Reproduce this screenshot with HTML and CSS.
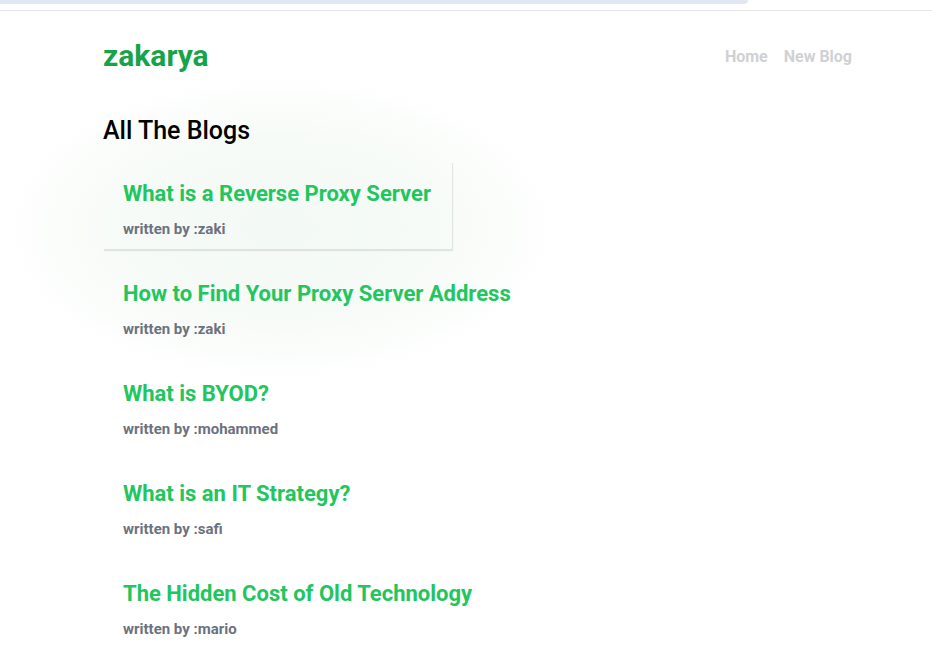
FILE: index.html
```html
<!DOCTYPE html>
<html lang="en">
<head>
<meta charset="utf-8">
<title>zakarya</title>
<link rel="stylesheet" href="styles.css">
</head>
<body>
<div class="chrome">
  <div class="chrome-tab"></div>
</div>
<div class="page">
  <nav class="navbar">
    <h1 class="logo">zakarya</h1>
    <div class="links">
      <a href="#" class="link">Home</a>
      <a href="#" class="link">New Blog</a>
    </div>
  </nav>
  <main class="content">
    <h2 class="section-title">All The Blogs</h2>
    <div class="blog-list">
      <div class="blog-preview is-hover">
        <h3 class="blog-title">What is a Reverse Proxy Server</h3>
        <p class="blog-author">written by :zaki</p>
      </div>
      <div class="blog-preview">
        <h3 class="blog-title">How to Find Your Proxy Server Address</h3>
        <p class="blog-author">written by :zaki</p>
      </div>
      <div class="blog-preview">
        <h3 class="blog-title">What is BYOD?</h3>
        <p class="blog-author">written by :mohammed</p>
      </div>
      <div class="blog-preview">
        <h3 class="blog-title">What is an IT Strategy?</h3>
        <p class="blog-author">written by :safi</p>
      </div>
      <div class="blog-preview">
        <h3 class="blog-title">The Hidden Cost of Old Technology</h3>
        <p class="blog-author">written by :mario</p>
      </div>
    </div>
  </main>
</div>
</body>
</html>
```
FILE: styles.css
```css
* { box-sizing: border-box; }
html, body { margin: 0; padding: 0; }
body {
  font-family: Roboto, "Liberation Sans", Arial, sans-serif;
  background-color: #ffffff;
  background-image: radial-gradient(ellipse 280px 155px at 280px 228px,
    rgba(40, 150, 60, 0.055) 0%,
    rgba(40, 150, 60, 0.045) 50%,
    rgba(40, 150, 60, 0.018) 82%,
    rgba(40, 150, 60, 0) 100%);
  background-repeat: no-repeat;
  color: #000;
  overflow: hidden;
  min-height: 657px;
}
.chrome {
  height: 11px;
  border-bottom: 1px solid #e3e5e8;
  background: #fff;
}
.chrome-tab {
  width: 748px;
  height: 4px;
  background: #e1e7f3;
  border-bottom-right-radius: 6px;
}
.page {
  padding: 0 80px 0 103px;
}
.navbar {
  display: flex;
  align-items: center;
  justify-content: space-between;
  height: 90px;
  padding-bottom: 1px;
}
.logo {
  margin: 0;
  font-size: 30px;
  font-weight: 700;
  color: #16a34a;
  line-height: 36px;
}
.links {
  display: flex;
  gap: 16px;
  padding-top: 2px;
}
.link {
  font-size: 16px;
  font-weight: 700;
  color: #cfd1d4;
  text-decoration: none;
}
.section-title {
  margin: 15px 0 0;
  font-size: 25px;
  font-weight: 500;
  line-height: 30px;
}
.blog-list {
  display: flex;
  flex-direction: column;
  gap: 12px;
  margin-top: 15px;
  align-items: flex-start;
}
.blog-preview {
  padding: 19px 20px 10px;
  width: 349px;
}
.blog-preview.is-hover {
  box-shadow: 1px 2px 1px rgba(0, 0, 0, 0.09);
}
.blog-title {
  margin: 0 0 11px;
  font-size: 22px;
  font-weight: 700;
  line-height: 28px;
  color: #22c55e;
  white-space: nowrap;
}
.blog-author {
  margin: 0;
  font-size: 15px;
  font-weight: 700;
  line-height: 20px;
  color: #6b7280;
}
```
